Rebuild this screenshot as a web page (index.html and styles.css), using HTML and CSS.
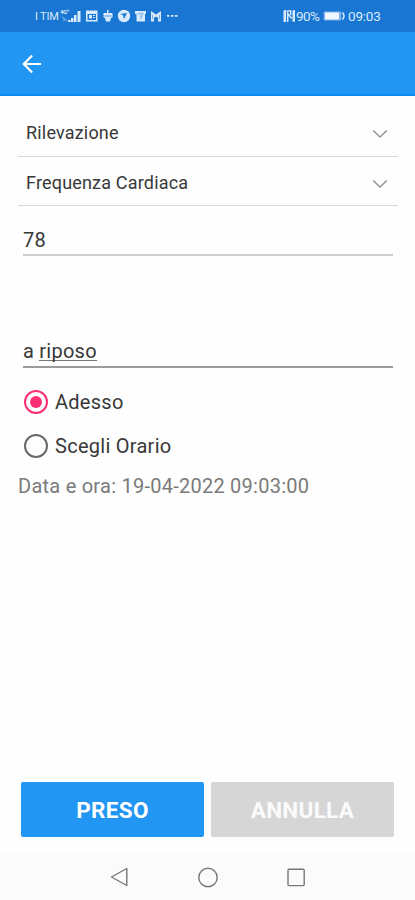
FILE: index.html
```html
<!DOCTYPE html>
<html lang="it">
<head>
<meta charset="utf-8">
<meta name="viewport" content="width=device-width">
<title>Rilevazione</title>
<link rel="stylesheet" href="styles.css">
</head>
<body>
<div class="screen">
  <header class="status">
    <span class="carrier">I TIM</span>
    <svg class="signal" width="22" height="14" viewBox="0 0 22 14" fill="#d8eafb">
      <text class="network" x="0" y="5">4G⁺</text>
      <path d="M8 13v-2h2.500v2zM11 13V9h2.500v4zM14 13V6h2.500v7zM17.500 13V2h3v11z"/>
      <path d="M2 8l3 2M3 11h4" stroke="#8fc2f2" fill="none"/>
    </svg>
    <svg class="notices" width="94" height="14" viewBox="0 0 94 14" fill="#d8eafb">
      <path fill-rule="evenodd" d="M1 1.500h11.500v11H1zM2.500 5v6H11V5zM4 6h3v3.500H4zM8 6h2v1H8zM8 8h2v1H8z"/>
      <path d="M22 1h1.500v3H27l1 2-1 1 1 1-2 1-1 3.500h-4L20 9l-2-1 1-1-1-2 1-1h3z"/>
      <path d="M19.500 7h7" stroke="#1976d2" stroke-width=".7"/>
      <circle cx="39" cy="7" r="6.200"/>
      <path d="M35 5l7-1-3 6-1-4z" fill="#1976d2"/>
      <path d="M50 2h11v3h-1v7.500h-8.500V5H50z"/>
      <path d="M53 4.700h5.500M55 7h3M55 9h2" stroke="#4c94df" fill="none" stroke-width=".8"/>
      <path d="M66 2l5 3.500L76 2v10.500h-3V9l-2-1.500L69 9v3.500h-3z"/>
      <path d="M67.500 6v4M74.500 6v4" stroke="#4c94df" stroke-width=".7"/>
      <path d="M82 6h2.500v1.800H82zM86 6h2.500v1.800H86zM90 6h2.500v1.800H90z"/>
    </svg>
    <span class="spacer"></span>
    <svg class="nfc" width="13" height="14" viewBox="0 0 13 14">
      <path d="M.5 1.500L3 1v12H.5zM9.500 1.500L12 1v11.500l-2.500.5z" fill="#d8eafb"/>
      <path d="M4.700 13V4.500l4 5M3.500 2h4.200v4" stroke="#d8eafb" stroke-width="1.500" fill="none"/>
    </svg>
    <span class="percent">90%</span>
    <svg class="battery" width="23" height="12" viewBox="0 0 23 12">
      <rect x=".6" y="1.400" width="17.800" height="9.200" rx="1" fill="#78b1ea"/>
      <path d="M2 2.500h14v7H2z" fill="#f2f8ff"/>
      <path d="M19.500 2.500q3 3.500 0 7" stroke="#d8eafb" stroke-width="1.500" fill="none"/>
    </svg>
    <span class="clock">09:03</span>
  </header>

  <nav class="toolbar">
    <svg width="20" height="20" viewBox="0 0 20 20" fill="none" stroke="#fff" stroke-width="2.200">
      <path d="M19 10H2M10.200 1.400L1.800 10l8.400 8.600"/>
    </svg>
  </nav>

  <main class="content">
    <div class="select"><span>Rilevazione</span>
      <svg width="16" height="10" viewBox="0 0 16 10"><path d="M1.200 1.600L8 8l6.800-6.400"/></svg>
    </div>
    <div class="select second"><span>Frequenza Cardiaca</span>
      <svg width="16" height="10" viewBox="0 0 16 10"><path d="M1.200 1.600L8 8l6.800-6.400"/></svg>
    </div>
    <div class="field value">78</div>
    <div class="field note"><span>a&nbsp;</span><span class="spell">riposo</span></div>
    <div class="radio"><span class="dot on"></span><span>Adesso</span></div>
    <div class="radio"><span class="dot"></span><span>Scegli Orario</span></div>
    <p class="date">Data e ora: 19-04-2022 09:03:00</p>
  </main>

  <div class="actions">
    <button class="btn primary">PRESO</button>
    <button class="btn">ANNULLA</button>
  </div>

  <footer class="system">
    <svg width="20" height="22" viewBox="0 0 20 22"><path d="M16.800 2.500v17L1.500 11z"/></svg>
    <svg width="20" height="22" viewBox="0 0 20 22"><circle cx="10" cy="11.500" r="9.200"/></svg>
    <svg width="20" height="22" viewBox="0 0 20 22"><rect x="2" y="3.200" width="16.200" height="16.400" rx="1"/></svg>
  </footer>
</div>
</body>
</html>
```
FILE: styles.css
```css
* { box-sizing: border-box; }
body { margin: 0; font-family: Roboto, "Liberation Sans", sans-serif; background: #fefefe; }
.screen { width: 415px; height: 900px; display: flex; flex-direction: column; }
.status { height: 32px; background: #1976d2; color: #d8eafb; display: flex; align-items: center; padding: 0 33px 0 35px; }
.carrier { font-size: 11px; width: 25px; white-space: nowrap; letter-spacing: -.2px; }
.signal { margin-right: 3px; }
.network { font-size: 6px; font-weight: 700; letter-spacing: -.4px; }
.spacer { flex: 1; }
.nfc { margin-right: 0; }
.percent { font-size: 13.5px; width: 27px; letter-spacing: -.6px; }
.battery { margin: 0 2px 0 0; }
.clock { font-size: 13.5px; width: 34px; letter-spacing: -.2px; }
.toolbar { height: 64px; background: #2196f3; border-bottom: 2px solid #0d8cf0; display: flex; align-items: center; padding: 1px 0 0 22px; }
.content { flex: 1; padding: 11px 17px 0 18px; color: #383838; }
.select { height: 50px; border-bottom: 1px solid #dadada; display: flex; align-items: center; justify-content: space-between; padding: 1px 10px 0 8px; font-size: 18px; letter-spacing: .18px; }
.select svg { fill: none; stroke: #929292; stroke-width: 1.4; margin-top: 3px; }
.second { height: 49px; padding-top: 2px; }
.field { font-size: 20px; line-height: 24px; letter-spacing: .25px; margin: 0 5px 0 5px; display: flex; align-items: flex-start; }
.value { height: 50px; padding-top: 22px; border-bottom: 2px solid #cfcfcf; }
.note { height: 112px; padding-top: 83px; border-bottom: 2px solid #9b9b9b; }
.spell { border-bottom: 1px solid #777; height: 22px; }
.radio { height: 44px; display: flex; align-items: center; font-size: 20px; letter-spacing: .27px; padding-left: 6px; gap: 8px; }
.note + .radio { margin-top: 12px; }
.dot { width: 24px; height: 24px; border: 2px solid #686868; border-radius: 50%; display: grid; place-items: center; margin-right: -1px; margin-top: -1px; }
.on { border-color: #fb2f75; }
.on::after { content: ""; width: 12px; height: 12px; border-radius: 50%; background: #fb2f75; }
.date { margin: 6px 0 0; font-size: 20px; line-height: 24px; letter-spacing: .25px; color: #7a7a7a; white-space: nowrap; }
.actions { display: flex; gap: 7px; padding: 0 21px 17px; }
.btn { flex: 1; height: 55px; border: 0; border-radius: 2px; background: #d6d6d6; color: #fbfbfb; font: 700 22.5px Roboto, sans-serif; letter-spacing: .3px; padding: 0; }
.primary { background: #2196f3; color: #fff; }
.system { height: 46px; background: #fbfbfb; display: flex; justify-content: center; align-items: center; gap: 68px; }
.system svg { fill: none; stroke: #777; stroke-width: 1.4; stroke-linejoin: round; }
```
